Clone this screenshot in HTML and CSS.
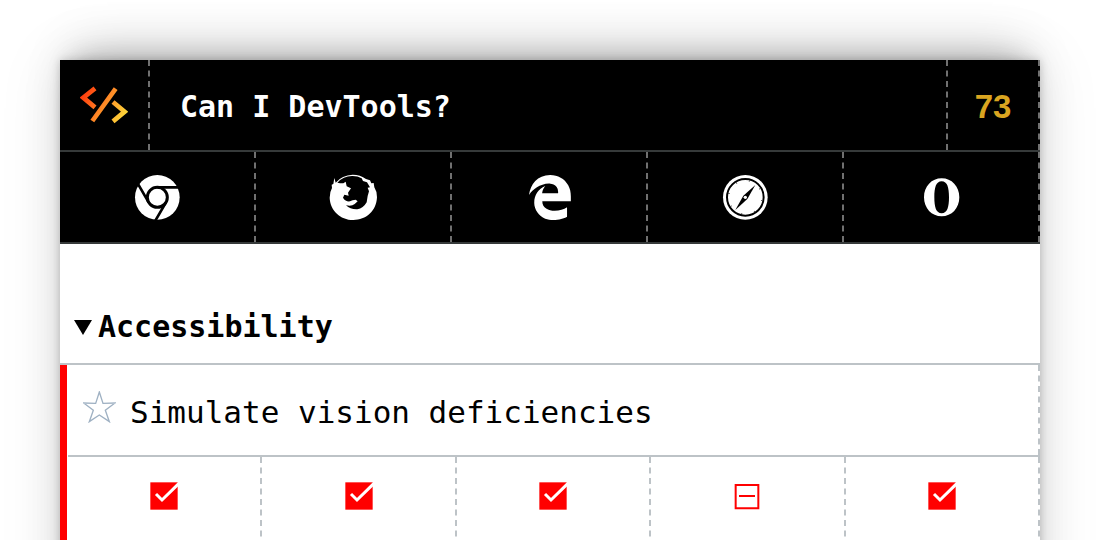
FILE: index.html
```html
<!DOCTYPE html>
<html lang="en">
<head>
<meta charset="utf-8">
<meta name="viewport" content="width=device-width, initial-scale=1">
<title>Can I DevTools?</title>
<link rel="stylesheet" href="styles.css">
</head>
<body>
<svg class="sprite" aria-hidden="true">
  <symbol id="yes" viewBox="0 0 84 84">
    <path d="M1 1H83V83H1Z" fill="#f00"/>
    <path d="M18 36L36 54L86 5" fill="none" stroke="#fff" stroke-width="9"/>
  </symbol>
  <symbol id="partial" viewBox="0 0 84 84">
    <path d="M8 9H76V79H8ZM18 42H66" fill="none" stroke="#f00" stroke-width="6"/>
  </symbol>
</svg>
<main class="card">
  <header class="header">
    <div class="bar">
      <div class="logo">
        <svg width="48" height="38" viewBox="120 139 144 114" aria-label="Logo" role="img">
          <defs>
            <linearGradient id="flame" gradientUnits="userSpaceOnUse" x1="125" y1="165" x2="250" y2="240">
              <stop offset="0" stop-color="#ff3a0c"/>
              <stop offset=".5" stop-color="#ff8a26"/>
              <stop offset="1" stop-color="#fdd83a"/>
            </linearGradient>
          </defs>
          <path d="M165 146L130 174L165 203M227 147L157 244M219 187L254 216L219 245" fill="none" stroke="url(#flame)" stroke-width="14"/>
        </svg>
      </div>
      <h1 class="title">Can I DevTools?</h1>
      <div class="count">73</div>
    </div>
    <div class="browsers">
      <div class="browser">
        <svg class="browser-icon" viewBox="39 39 144 144" role="img" aria-label="Chrome">
          <circle cx="112" cy="112" r="67" fill="#fff"/>
          <circle cx="112" cy="112" r="30" fill="none" stroke="#000" stroke-width="9"/>
          <path d="M112 82H182M138 127L106 182M86 127L53 70" stroke="#000" stroke-width="8"/>
        </svg>
      </div>
      <div class="browser">
        <svg class="browser-icon" viewBox="57 39 144 144" role="img" aria-label="Firefox">
          <path d="M73 54L77 68Q96 45 128 44Q151 44 168 57L180 61L184 70L191 69L193 82Q201 94 201 112C199 154 168 180 130 180C90 180 60 150 59 113Q59 96 66 84L65 74L70 72Z" fill="#fff"/>
          <path d="M82 68Q101 47 128 48Q143 48 155 55L159 63L171 67L180 82L173 83L177 94L173 108L170 127Q160 145 142 148Q121 149 108 136Q125 140 134 132L143 124L137 119Q127 119 120 124Q107 126 99 113L103 104L116 107L114 98L123 85L110 79L107 65L100 70L90 70Z" fill="#000"/>
        </svg>
      </div>
      <div class="browser">
        <svg class="browser-icon" viewBox="-18 -14 528 528" role="img" aria-label="Edge">
          <path d="M486.286 243.671c0-44.032-7.754-84.465-28.801-122.405C416.498 47.879 343.912 8.001 258.893 8.001 118.962 7.724 40.617 113.214 26.056 227.679c42.429-61.312 117.073-121.376 220.375-124.966 0 0 109.666 0 99.419 104.957H169.997c6.369-37.386 18.554-58.986 34.339-78.926-75.048 34.893-121.85 96.096-120.742 188.315.83 71.448 50.124 144.836 120.743 171.976 83.357 31.847 192.776 7.2 240.132-21.324V363.307c-80.864 56.494-270.871 60.924-272.255-67.572h314.073v-52.064z" fill="#fff"/>
        </svg>
      </div>
      <div class="browser">
        <svg class="browser-icon" viewBox="48 39 144 144" role="img" aria-label="Safari">
          <circle cx="121" cy="112" r="67" fill="#fff"/>
          <circle cx="121" cy="112" r="55" fill="none" stroke="#000" stroke-width="6"/>
          <circle cx="121" cy="112" r="50" fill="none" stroke="#000" stroke-width="4" stroke-dasharray="2 37.3" stroke-dashoffset="30"/>
          <path d="M151 75L127 117L91 150L115 107Z" fill="#000"/>
          <circle cx="121" cy="112" r="5" fill="#fff"/>
        </svg>
      </div>
      <div class="browser">
        <svg class="browser-icon" viewBox="51 39 144 144" role="img" aria-label="Opera">
          <path fill-rule="evenodd" d="M125 55C155 55 178 79 178 112S155 169 125 169S72 145 72 112S95 55 125 55ZM125 64C108 64 103 83 103 112S108 160 125 160S147 141 147 112S142 64 125 64Z" fill="#fff"/>
        </svg>
      </div>
    </div>
  </header>
  <details class="group" open>
    <summary class="group-head">
      <svg class="marker" viewBox="0 0 18 15" aria-hidden="true"><path d="M0 0H18L9 15Z"/></svg>
      <h2 class="group-title">Accessibility</h2>
    </summary>
    <article class="feature">
      <div class="feature-head">
        <button class="star" type="button" aria-label="Add to favourites">
          <svg class="star-icon" viewBox="98 274 99 96" aria-hidden="true"><path d="M147 277L158 311L194 310L165 332L177 366L147 346L117 366L129 332L100 310L136 311Z"/></svg>
        </button>
        <h3 class="feature-title">Simulate vision deficiencies</h3>
      </div>
      <div class="support">
        <div class="cell"><svg class="mark" role="img" aria-label="Supported"><use href="#yes"/></svg></div>
        <div class="cell"><svg class="mark" role="img" aria-label="Supported"><use href="#yes"/></svg></div>
        <div class="cell"><svg class="mark" role="img" aria-label="Supported"><use href="#yes"/></svg></div>
        <div class="cell"><svg class="mark" role="img" aria-label="Not supported"><use href="#partial"/></svg></div>
        <div class="cell"><svg class="mark" role="img" aria-label="Supported"><use href="#yes"/></svg></div>
      </div>
    </article>
  </details>
</main>
</body>
</html>
```
FILE: styles.css
```css
* {
  box-sizing: border-box;
}

html {
  scrollbar-width: none;
}

body {
  margin: 0;
  padding: 60px;
  background: #fff;
  color: #000;
  font-family: "DejaVu Sans Mono", monospace;
}

h1, h2, h3 {
  margin: 0;
}

.sprite {
  position: absolute;
  width: 0;
  height: 0;
}

.card {
  padding-bottom: 80px;
  background: #fff;
  box-shadow:
    0 0 8px rgba(0, 0, 0, .16),
    0 -12px 24px -12px rgba(0, 0, 0, .2),
    0 -24px 48px -16px rgba(0, 0, 0, .2),
    0 0 60px rgba(0, 0, 0, .1);
}

.header {
  background: #000;
  color: #fff;
}

.bar {
  display: grid;
  grid-template-columns: 90px 1fr 92px;
  height: 92px;
  border-bottom: 2px solid #363a3a;
}

.logo,
.title,
.count,
.browser {
  display: flex;
  align-items: center;
  justify-content: center;
  border-right: 2px dashed #707070;
}

.title {
  justify-content: flex-start;
  padding: 4px 30px 0;
  font-size: 30px;
  line-height: 36px;
}

.count {
  padding-top: 4px;
  color: #daa520;
  font: bold 33px/36px "Liberation Sans", sans-serif;
}

.browsers {
  display: grid;
  grid-template-columns: repeat(5, 1fr);
  height: 92px;
  border-bottom: 2px solid #363a3a;
}

.browser-icon {
  width: 48px;
  height: 48px;
}

.group {
  padding-top: 47px;
}

.group-head {
  display: flex;
  align-items: center;
  gap: 6px;
  height: 74px;
  padding-left: 14px;
  border-bottom: 2px solid #bdc3c7;
  list-style: none;
  cursor: pointer;
}

.marker {
  width: 18px;
  height: 15px;
}

.group-title {
  font-size: 30px;
  line-height: 36px;
}

.feature {
  padding-left: 1px;
  border-left: 7px solid #f00;
}

.feature-head {
  display: flex;
  align-items: center;
  gap: 14px;
  height: 90px;
  padding-left: 15px;
  border-right: 2px dashed #bdc3c7;
}

.star {
  padding: 0 0 6px;
  border: 0;
  background: none;
  cursor: pointer;
}

.star-icon {
  display: block;
  width: 33px;
  height: 32px;
  fill: none;
  stroke: #9fb1c3;
  stroke-width: 4;
}

.feature-title {
  padding-top: 4px;
  font-size: 31px;
  font-weight: normal;
  line-height: 36px;
}

.support {
  display: grid;
  grid-template-columns: repeat(5, 1fr);
  border-top: 2px solid #bdc3c7;
}

.cell {
  display: flex;
  justify-content: center;
  height: 90px;
  padding-top: 25px;
  border-right: 2px dashed #bdc3c7;
}

.mark {
  width: 28px;
  height: 28px;
}
```
